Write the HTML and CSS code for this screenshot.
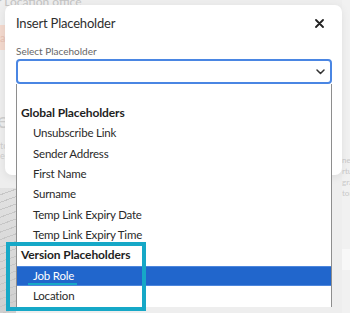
FILE: index.html
```html
<!DOCTYPE html>
<html>
<head>
<meta charset="utf-8">
<link rel="stylesheet" href="styles.css">
</head>
<body>
<div class="backdrop">
  <div class="bg-left">
    <div class="bg-loc">r Location office</div>
    <div class="bg-pink">a</div>
    <div class="bg-big">e</div>
    <div class="bg-small">to<br>ec</div>
    <div class="bg-photo"></div>
  </div>
  <div class="bg-mid"></div>
  <div class="bg-right">
    <div class="bg-rtext">ne<br>rtu<br>gra<br>ton</div>
    <div class="bg-rpanel"></div>
  </div>
</div>

<div class="modal">
  <div class="modal-header">
    <h1 class="modal-title">Insert Placeholder</h1>
    <button class="close-btn" aria-label="Close">
      <svg width="9" height="9" viewBox="0 0 9 9"><path d="M1 1 L8 8 M8 1 L1 8" stroke="#222" stroke-width="1.8" stroke-linecap="round" fill="none"/></svg>
    </button>
  </div>
  <label class="field-label">Select Placeholder</label>
  <div class="select-box">
    <svg class="chevron" width="9" height="6" viewBox="0 0 9 6"><path d="M1 1 L4.5 4.5 L8 1" stroke="#333" stroke-width="1.5" fill="none" stroke-linecap="round" stroke-linejoin="round"/></svg>
  </div>
</div>

<div class="dropdown">
  <div class="opt empty"></div>
  <div class="opt group">Global Placeholders</div>
  <div class="opt item">Unsubscribe Link</div>
  <div class="opt item">Sender Address</div>
  <div class="opt item">First Name</div>
  <div class="opt item">Surname</div>
  <div class="opt item">Temp Link Expiry Date</div>
  <div class="opt item">Temp Link Expiry Time</div>
  <div class="opt group">Version Placeholders</div>
  <div class="opt item selected">Job Role</div>
  <div class="opt item">Location</div>
</div>

<div class="annot-box"></div>
<div class="annot-line"></div>
</body>
</html>
```

FILE: styles.css
```css
* { box-sizing: border-box; }
html, body {
  margin: 0;
  padding: 0;
  width: 350px;
  height: 313px;
  overflow: hidden;
}
body {
  position: relative;
  background: #eeeeee;
  font-family: Lato, "Open Sans", sans-serif;
  color: #333;
}

/* faded page behind the modal */
.backdrop {
  display: grid;
  grid-template-columns: 16px 1fr 8px;
  height: 313px;
}
.bg-left {
  display: flex;
  flex-direction: column;
  overflow: visible;
}
.bg-loc {
  white-space: nowrap;
  font-size: 12px;
  line-height: 12px;
  margin-top: -4px;
  margin-left: -3px;
  color: #c4c4c4;
}
.bg-pink {
  margin-top: 17px;
  width: 8px;
  height: 25px;
  background: #f3d9ce;
  color: #e8c3b5;
  font-size: 11px;
  line-height: 25px;
  overflow: hidden;
}
.bg-big {
  margin-top: 60px;
  font-size: 22px;
  line-height: 20px;
  color: #cfcfcf;
  margin-left: -3px;
}
.bg-small {
  margin-top: 11px;
  font-size: 9px;
  line-height: 10px;
  color: #cfcfcf;
}
.bg-photo {
  margin-top: auto;
  height: 125px;
  background:
    repeating-linear-gradient(160deg, transparent 0 6px, #c6c6c6 6px 7px),
    linear-gradient(#e2e2e2, #cfcfcf);
}
.bg-right {
  display: flex;
  flex-direction: column;
  background: #f1f1f1;
}
.bg-rtext {
  margin-top: 155px;
  font-size: 8px;
  line-height: 11px;
  color: #c9c9c9;
  white-space: nowrap;
  overflow: hidden;
}
.bg-rpanel {
  margin-top: 50px;
  height: 21px;
  background: #f8f8f8;
}

/* modal */
.modal {
  position: absolute;
  left: 5px;
  top: 5px;
  width: 337px;
  height: 170px;
  background: #fff;
  border-radius: 7px;
  box-shadow: 0 2px 8px rgba(0,0,0,0.08);
  padding: 0 10px 0 11px;
}
.modal-header {
  height: 36px;
  display: flex;
  align-items: center;
  justify-content: space-between;
}
.modal-title {
  margin: 0;
  font-size: 13px;
  letter-spacing: -0.2px;
  font-weight: 400;
  color: #2e2e2e;
}
.close-btn {
  border: 0;
  background: none;
  padding: 0;
  margin-right: 8px;
  width: 9px;
  height: 9px;
  display: flex;
}
.field-label {
  display: block;
  margin-top: 3px;
  font-size: 10px;
  line-height: 14px;
  color: #666;
}
.select-box {
  margin-top: 1px;
  height: 25px;
  border: 2px solid #4a86e3;
  border-radius: 4px;
  display: flex;
  align-items: center;
  justify-content: flex-end;
  padding-right: 5px;
}

/* native select popup */
.dropdown {
  position: absolute;
  left: 16px;
  top: 84px;
  width: 316px;
  height: 223px;
  background: #fff;
  border-left: 1px solid #8e8e8e;
  border-right: 1px solid #8e8e8e;
  font-size: 11.5px;
  letter-spacing: -0.2px;
  color: #2a2a2a;
}
.opt {
  height: 20.33px;
  line-height: 20.33px;
  white-space: nowrap;
}
.opt.empty { height: 19px; }
.opt.group {
  padding-left: 4px;
  font-size: 12px;
  letter-spacing: -0.1px;
  font-weight: 700;
  color: #1e1e1e;
}
.opt.item { padding-left: 16px; }
.opt.selected {
  background: #2166cc;
  color: #fff;
  box-shadow: inset 0 1px 0 #4d86dc, inset 0 -1px 0 #4d86dc;
}

/* annotation */
.annot-box {
  position: absolute;
  left: 6px;
  top: 242px;
  width: 140px;
  height: 69px;
  border: 4px solid #16a8c7;
}
.annot-line {
  position: absolute;
  left: 28px;
  top: 283px;
  width: 49px;
  height: 2px;
  background: #16a8c7;
}
```
